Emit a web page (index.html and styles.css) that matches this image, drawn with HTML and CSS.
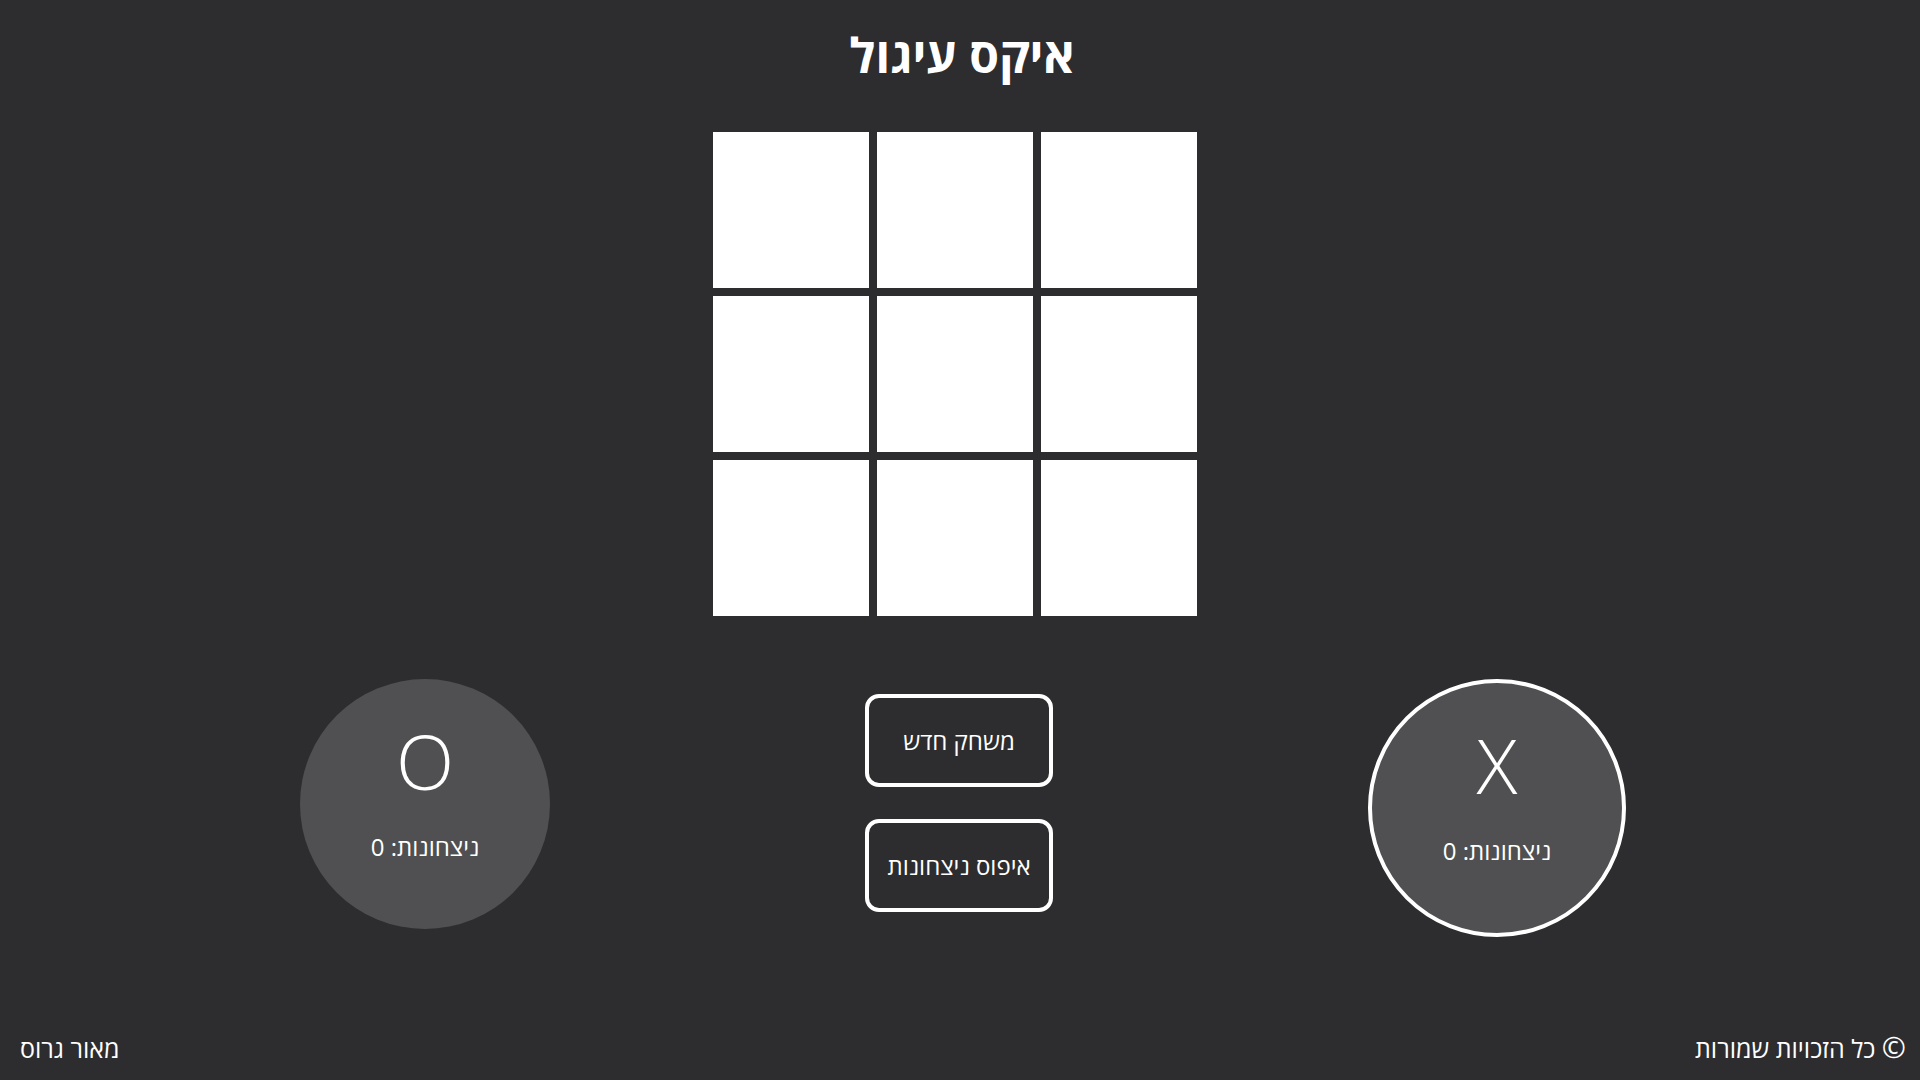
FILE: index.html
```html
<!DOCTYPE html>
<html lang="he" dir="rtl">
<head>
<meta charset="utf-8">
<title>איקס עיגול</title>
<link rel="stylesheet" href="styles.css">
</head>
<body>
<div class="page">
  <h1 class="title">איקס עיגול</h1>
  <div class="board">
    <div class="cell"></div><div class="cell"></div><div class="cell"></div>
    <div class="cell"></div><div class="cell"></div><div class="cell"></div>
    <div class="cell"></div><div class="cell"></div><div class="cell"></div>
  </div>
  <div class="panel">
    <div class="player player-o">
      <div class="symbol">O</div>
      <div class="wins">ניצחונות: 0</div>
    </div>
    <div class="controls">
      <button class="btn">משחק חדש</button>
      <button class="btn">איפוס ניצחונות</button>
    </div>
    <div class="player player-x active">
      <div class="symbol">X</div>
      <div class="wins">ניצחונות: 0</div>
    </div>
  </div>
  <footer class="footer">
    <span class="rights"><span class="copy">©</span> כל הזכויות שמורות</span>
    <span class="author">מאור גרוס</span>
  </footer>
</div>
</body>
</html>
```

FILE: styles.css
```css
* { box-sizing: border-box; }
html, body { margin: 0; padding: 0; }
body {
  background: #2d2d2f;
  color: #ffffff;
  font-family: "Open Sans", "DejaVu Sans", sans-serif;
  width: 1920px;
  height: 1080px;
  overflow: hidden;
}
.page {
  height: 1080px;
  display: flex;
  flex-direction: column;
}
.title {
  margin: 22px 0 0;
  font-size: 48px;
  font-weight: 700;
  text-align: center;
  line-height: normal;
  padding-left: 4px;
}
.board {
  margin-top: 45px;
  margin-left: 713px;
  margin-right: auto;
  display: grid;
  grid-template-columns: repeat(3, 156px);
  grid-template-rows: repeat(3, 156px);
  gap: 8px;
  direction: ltr;
}
.cell { background: #ffffff; }
.panel {
  direction: ltr;
  margin-top: 63px;
  display: flex;
  align-items: flex-start;
  padding-left: 300px;
  gap: 315px;
}
.player {
  width: 250px;
  height: 206px;
  box-sizing: content-box;
  border-radius: 50%;
  background: #505052;
  display: flex;
  flex-direction: column;
  align-items: center;
  padding-top: 44px;
}
.player.active { border: 4px solid #ffffff; }
.symbol {
  font-size: 76px;
  font-weight: 300;
  line-height: 76px;
  height: 76px;
}
.wins {
  margin-top: 31px;
  font-size: 24px;
  font-weight: 400;
  direction: rtl;
}
.controls {
  margin-top: 15px;
  display: flex;
  flex-direction: column;
  gap: 32px;
}
.btn {
  width: 188px;
  height: 93px;
  border: 4px solid #ffffff;
  border-radius: 14px;
  background: transparent;
  color: #ffffff;
  font-family: "Open Sans", "DejaVu Sans", sans-serif;
  font-size: 24px;
  direction: rtl;
  padding: 0;
}
.footer {
  margin-top: auto;
  display: flex;
  justify-content: space-between;
  align-items: baseline;
  padding: 0 14px 15px 20px;
  font-size: 25px;
  line-height: 33px;
}
.copy {
  font-size: 29px;
}
```
